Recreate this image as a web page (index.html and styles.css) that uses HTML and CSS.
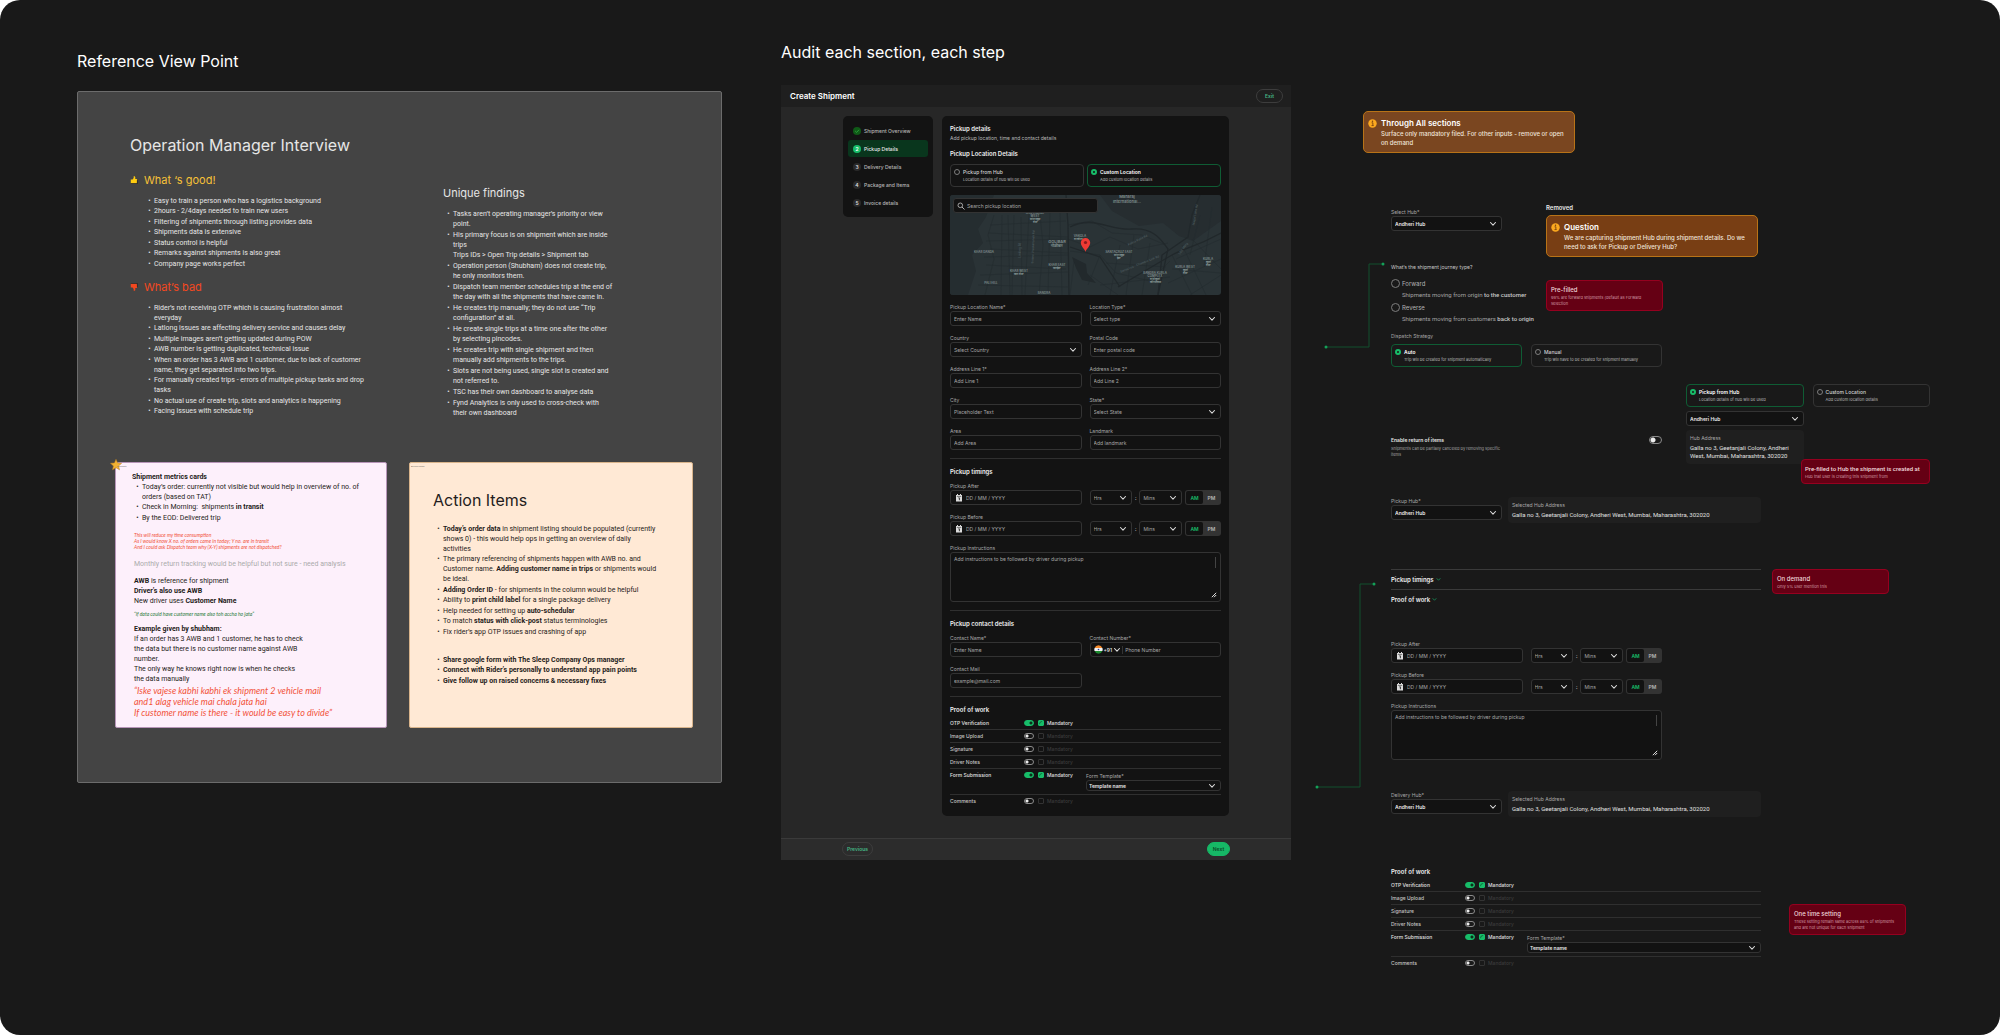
FILE: index.html
```html
<!DOCTYPE html>
<html lang="en">
<head>
    <meta charset="UTF-8">
    <title>Shipment audit board</title>
    <link rel="stylesheet" href="styles.css">
</head>
<body>
    <!-- shared icons -->
    <svg class="sprite" aria-hidden="true">
        <symbol id="chevron" viewBox="0 0 8 8"><path d="M1.5 2.5 4 5.2 6.5 2.5" fill="none" stroke="currentColor" stroke-width="1.1" stroke-linecap="round" stroke-linejoin="round"/></symbol>
        <symbol id="calendar" viewBox="0 0 8 8"><path d="M1 1h1V0h1v1h2V0h1v1h1v6.5H1z" fill="currentColor"/><path d="M1.8 2.4h4.4" stroke="#121212" stroke-width=".5"/><path d="M3.4 3.8h1v2.4" fill="none" stroke="#121212" stroke-width=".8"/></symbol>
        <symbol id="info" viewBox="0 0 10 10"><circle cx="5" cy="5" r="4.7" fill="#fca91f"/><path d="M4 4.2h1.4v3M3.9 7.3h2.4" fill="none" stroke="#7a4310" stroke-width="1"/><circle cx="5" cy="2.6" r=".8" fill="#7a4310"/></symbol>
        <symbol id="thumb" viewBox="0 0 10 10"><path d="M1 4.500h2.200L4.600 2.600V.3c1.800-.5 2.400 1 1.900 3.400H9L8.600 9.200H1z" fill="currentColor"/><path d="M1 9.600h8.200V4.500" fill="none" stroke="#22201c" stroke-width=".8"/></symbol>
    </svg>

    <main class="board">
        <section class="research">
            <h1>Reference View Point</h1>
            <div class="panel">
                <h2>Operation Manager Interview</h2>
                <div class="findings">
                    <div>
                        <h3 class="good"><svg><use href="#thumb"/></svg>What ‘s good!</h3>
                        <ul>
                            <li>Easy to train a person who has a logistics background</li>
                            <li>2hours - 2/4days needed to train new users</li>
                            <li>Filtering of shipments through listing provides data</li>
                            <li>Shipments data is extensive</li>
                            <li>Status control is helpful</li>
                            <li>Remarks against shipments is also great</li>
                            <li>Company page works perfect</li>
                        </ul>
                        <h3 class="bad"><svg class="flip"><use href="#thumb"/></svg>What’s bad</h3>
                        <ul>
                            <li>Rider’s not receiving OTP which is causing frustration almost<br>everyday</li>
                            <li>Latlong issues are affecting delivery service and causes delay</li>
                            <li>Multiple images aren’t getting updated during POW</li>
                            <li>AWB number is getting duplicated, technical issue</li>
                            <li>When an order has 3 AWB and 1 customer, due to lack of customer name, they get separated into two trips.</li>
                            <li>For manually created trips - errors of multiple pickup tasks and drop tasks</li>
                            <li>No actual use of create trip, slots and analytics is happening</li>
                            <li>Facing issues with schedule trip</li>
                        </ul>
                    </div>
                    <div class="unique">
                        <h3>Unique findings</h3>
                        <ul>
                            <li>Tasks aren’t operating manager’s priority or view<br>point.</li>
                            <li>His primary focus is on shipment which are inside<br>trips<br>Trips IDs &gt; Open Trip details &gt; Shipment tab</li>
                            <li>Operation person (Shubham) does not create trip,<br>he only monitors them.</li>
                            <li>Dispatch team member schedules trip at the end of<br>the day with all the shipments that have came in.</li>
                            <li>He creates trip manually; they do not use “Trip<br>configuration” at all.</li>
                            <li>He create single trips at a time one after the other<br>by selecting pincodes.</li>
                            <li>He creates trip with single shipment and then<br>manually add shipments to the trips.</li>
                            <li>Slots are not being used, single slot is created and<br>not referred to.</li>
                            <li>TSC has their own dashboard to analyse data</li>
                            <li>Fynd Analytics is only used to cross-check with<br>their own dashboard</li>
                        </ul>
                    </div>
                </div>

                <div class="cards">
                    <article class="card pink">
                        <svg class="star" viewBox="0 0 12 12"><path d="M6 .3l1.600 3.600 4 .4-3 2.600.9 3.900L6 8.700l-3.500 2.100.9-3.900-3-2.600 4-.4z" fill="#f2b233" stroke="#b9791a" stroke-width=".5"/></svg>
                        <span class="tag">Shipments</span>
                        <h4>Shipment metrics cards</h4>
                        <ul>
                            <li>Today’s order: currently not visible but would help in overview of no. of<br>orders (based on TAT)</li>
                            <li>Check in Morning:&nbsp; shipments <b>in transit</b></li>
                            <li>By the EOD: Delivered trip</li>
                        </ul>
                        <p class="scribble red">This will reduce my time consumption<br>As I would know X no. of orders came in today; Y no. are in transit<br>And I could ask Dispatch team why (X-Y) shipments are not dispatched?</p>
                        <p class="muted">Monthly return tracking would be helpful but not sure - need analysis</p>
                        <p><b>AWB</b> is reference for shipment<br><b>Driver’s also use AWB</b><br>New driver uses <b>Customer Name</b></p>
                        <p class="scribble green">“If data could have customer name also toh accha ho jata”</p>
                        <p class="example"><b>Example given by shubham:</b><br>If an order has 3 AWB and 1 customer, he has to check<br>the data but there is no customer name against AWB<br>number.<br>The only way he knows right now is when he checks<br>the data manually</p>
                        <p class="quote">“Iske vajese kabhi kabhi ek shipment 2 vehicle mail<br>and1 alag vehicle mai chala jata hai<br>If customer name is there - it would be easy to divide”</p>
                    </article>
                    <article class="card peach">
                        <span class="tag">ACTION ITEMS</span>
                        <h3>Action Items</h3>
                        <ul>
                            <li><b>Today’s order data</b> in shipment listing should be populated (currently<br>shows 0) - this would help ops in getting an overview of daily<br>activities</li>
                            <li>The primary referencing of shipments happen with AWB no. and<br>Customer name. <b>Adding customer name in trips</b> or shipments would<br>be ideal.</li>
                            <li><b>Adding Order ID</b> - for shipments in the column would be helpful</li>
                            <li>Ability to <b>print child label</b> for a single package delivery</li>
                            <li>Help needed for setting up <b>auto-schedular</b></li>
                            <li>To match <b>status with click-post</b> status terminologies</li>
                            <li>Fix rider’s app OTP issues and crashing of app</li>
                        </ul>
                        <ul class="next">
                            <li><b>Share google form with The Sleep Company Ops manager</b></li>
                            <li><b>Connect with Rider’s personally to understand app pain points</b></li>
                            <li><b>Give follow up on raised concerns &amp; necessary fixes</b></li>
                        </ul>
                    </article>
                </div>
            </div>
        </section>

        <section class="audit">
            <h1>Audit each section, each step</h1>
            <div class="window">
                <header>
                    <h2>Create Shipment</h2>
                    <button type="button" class="pill">Exit</button>
                </header>
                <div class="workspace">
                    <nav class="steps">
                        <a href="#"><i class="done"><svg viewBox="0 0 8 8"><path d="M2.200 4l1.400 1.400L6 2.800" fill="none" stroke="#39b54a" stroke-width=".7"/></svg></i>Shipment Overview</a>
                        <a href="#" class="active"><i>2</i>Pickup Details</a>
                        <a href="#"><i>3</i>Delivery Details</a>
                        <a href="#"><i>4</i>Package and Items</a>
                        <a href="#"><i>5</i>Invoice details</a>
                    </nav>

                    <form class="sheet">
                        <h3>Pickup details</h3>
                        <p class="sub">Add pickup location, time and contact details</p>
                        <h3 class="location">Pickup Location Details</h3>
                        <div class="options tight">
                            <label class="option"><input type="radio" name="source"><b>Pickup from Hub</b><small>Location details of hub will be used</small></label>
                            <label class="option"><input type="radio" name="source" checked><b>Custom Location</b><small>Add custom location details</small></label>
                        </div>

                        <div class="map">
                            <svg class="streets" viewBox="0 0 271 100" preserveAspectRatio="xMidYMid slice">
                                <rect width="271" height="100" fill="#2a3336"/>
                                <path d="M0 0H44L36 22 28 34 33 48 22 60 26 76 18 100H0z" fill="#252d30"/>
                                <path d="M150 0h121v26l-28 20-14-5-16-13-24 3-27-15z" fill="#262d30"/>
                                <path d="M122 62l14 7 1 9 9 10-14-3-6-12z" fill="#22292c"/>
                                <g fill="none" stroke="#242c2f" stroke-width=".6">
                                    <path d="M44 20l-6 20 6 24-9 36M52 20l-1 80M58 20l2 80M64 20l-2 80M71 22l1 78M79 18l-4 82M90 20l3 30-4 50M100 18l-2 82M110 18l2 82M40 30l76-4M38 38l80 4M36 46l82-2M40 54l78 4M34 62l84-2M36 70l80 4M30 80l88-3M28 90l90 2"/>
                                    <path d="M118 30l24-4 20 12 30 2 24 10M118 44l22 8 20-10 28 12 30-6M120 56l30 4 16 18 34 8 20-20M124 66l-4 34M140 80l28 20M150 60l-12 30M170 50l-10 50M184 40l-8 60M200 48l-8 52M156 68l60 4M150 90l70-8M222 60l20 40M232 50l24 50M242 44l29 30M226 64l45-20M222 74l49 4M218 88l53-24M240 100l31-20M250 20l-10 40M262 12l-8 60"/>
                                </g>
                                <g fill="none" stroke="#21282b" stroke-width="1.300">
                                    <path d="M116 0l2 30 1 70M120 32c24-12 40 4 62 2s30 12 36 20l-10 46"/>
                                    <path d="M208 100l4-40 26-18 4-22 8-20M168 92c20-12 40-24 54-32s20-6 49-22M120 52l30 10 20 30"/>
                                </g>
                                <g class="road-names"><text transform="rotate(-90 71 55)" x="71" y="55">Linking Rd</text><text transform="rotate(-88 84 52)" x="84" y="52">Swami Vivekananda Rd</text><text transform="rotate(-26 188 46)" x="188" y="46">Kalina Kurla Rd</text><text transform="rotate(-22 190 70)" x="190" y="70">Santacruz - Chembur Link Rd</text><text transform="rotate(-80 246 20)" x="246" y="20">Mogul Lane Rd</text><text transform="rotate(-55 234 54)" x="234" y="54">LBS Marg</text></g>
                                <g class="places">
                                    <text x="177" y="3" class="big">Maharaj</text><text x="177" y="8" class="big">International...</text>
                                    <text x="85" y="19">SANTACRUZ</text><text x="85" y="22">WEST</text><text x="85" y="25">सांताक्रूझ</text><text x="85" y="28">वेस्ट</text>
                                    <text x="107" y="48" class="big">GOLIBAR</text><text x="107" y="52" class="big">गोळीबार</text>
                                    <text x="130" y="42">VAKOLA</text><text x="128" y="45">वाकोला</text>
                                    <text x="34" y="58">KHAR DANDA</text>
                                    <text x="169" y="58">SANTACRUZ EAST</text><text x="169" y="61">सांताक्रूझ</text><text x="169" y="64">ईस्ट</text>
                                    <text x="107" y="71">KHAR EAST</text><text x="107" y="74">खार ईस्ट</text>
                                    <text x="69" y="77">KHAR WEST</text><text x="69" y="80">खार वेस्ट</text>
                                    <text x="41" y="89">PALI HILL</text>
                                    <text x="94" y="99">BANDRA</text>
                                    <text x="205" y="79">BANDRA KURLA</text><text x="205" y="82">COMPLEX</text><text x="205" y="85">वांद्रे कुर्ला</text><text x="205" y="88">कॉम्प्लेक्स</text>
                                    <text x="235" y="73">KURLA WEST</text><text x="235" y="76">कुर्ला</text><text x="235" y="79">वेस्ट</text>
                                    <text x="258" y="65">KURLA</text><text x="258" y="68">कुर्ला</text><text x="258" y="71">वेस्ट</text>
                                </g>
                                <path d="M135.500 57c-.6-3-4.700-5.400-4.700-9.200a4.700 4.700 0 0 1 9.400 0c0 3.800-4.100 6.200-4.700 9.200z" fill="#f03a34"/><circle cx="135.500" cy="47.500" r="1.600" fill="#8e1a1d"/>
                            </svg>
                            <label class="search"><svg viewBox="0 0 8 8"><circle cx="3.300" cy="3.300" r="2.300" fill="none" stroke="currentColor" stroke-width=".8"/><path d="M5 5l2.500 2.500" stroke="currentColor" stroke-width=".9"/></svg><input type="text" placeholder="Search pickup location" aria-label="Search pickup location"></label>
                        </div>

                        <div class="fields">
                            <label class="field">Pickup Location Name*<input type="text" placeholder="Enter Name"></label>
                            <label class="field">Location Type*<span class="select"><select><option>Select type</option></select><svg><use href="#chevron"/></svg></span></label>
                            <label class="field">Country<span class="select"><select><option>Select Country</option></select><svg><use href="#chevron"/></svg></span></label>
                            <label class="field">Postal Code<input type="text" placeholder="Enter postal code"></label>
                            <label class="field">Address Line 1*<input type="text" placeholder="Add Line 1"></label>
                            <label class="field">Address Line 2*<input type="text" placeholder="Add Line 2"></label>
                            <label class="field">City<input type="text" placeholder="Placeholder Text"></label>
                            <label class="field">State*<span class="select"><select><option>Select State</option></select><svg><use href="#chevron"/></svg></span></label>
                            <label class="field">Area<input type="text" placeholder="Add Area"></label>
                            <label class="field">Landmark<input type="text" placeholder="Add landmark"></label>
                        </div>
                        <hr>
                        <h3>Pickup timings</h3>
                        <div class="timings">
                            <div class="slot">
                                <label class="field">Pickup After<span class="date"><svg><use href="#calendar"/></svg><input type="text" placeholder="DD / MM / YYYY"></span></label>
                                <div class="clock">
                                    <span class="select"><select aria-label="Hours"><option>Hrs</option></select><svg><use href="#chevron"/></svg></span>:<span class="select"><select aria-label="Minutes"><option>Mins</option></select><svg><use href="#chevron"/></svg></span>
                                    <span class="ampm"><button type="button" class="on">AM</button><button type="button">PM</button></span>
                                </div>
                            </div>
                            <div class="slot">
                                <label class="field">Pickup Before<span class="date"><svg><use href="#calendar"/></svg><input type="text" placeholder="DD / MM / YYYY"></span></label>
                                <div class="clock">
                                    <span class="select"><select aria-label="Hours"><option>Hrs</option></select><svg><use href="#chevron"/></svg></span>:<span class="select"><select aria-label="Minutes"><option>Mins</option></select><svg><use href="#chevron"/></svg></span>
                                    <span class="ampm"><button type="button" class="on">AM</button><button type="button">PM</button></span>
                                </div>
                            </div>
                            <label class="field area">Pickup Instructions<textarea placeholder="Add instructions to be followed by driver during pickup"></textarea><svg class="grip" viewBox="0 0 6 6"><path d="M.8 5.200 5.200.8M3 5.200l2.200-2.200" stroke="#ddd" stroke-width="1"/></svg></label>
                        </div>
                        <hr>
                        <h3>Pickup contact details</h3>
                        <div class="fields contact">
                            <label class="field">Contact Name*<input type="text" placeholder="Enter Name"></label>
                            <label class="field">Contact Number*<span class="phone"><svg class="flag" viewBox="0 0 9 9"><path d="M.6 3a4.200 4.200 0 0 1 7.800 0z" fill="#f58a2c"/><path d="M.6 3h7.800a4 4 0 0 1 0 3H.6a4 4 0 0 1 0-3z" fill="#f3f3f3"/><path d="M.6 6a4.200 4.200 0 0 0 7.800 0z" fill="#1d8b2f"/><circle cx="4.500" cy="4.500" r=".8" fill="#2a3b9a"/></svg><b>+91</b><svg><use href="#chevron"/></svg><input type="tel" placeholder="Phone Number"></span></label>
                            <label class="field">Contact Mail<input type="email" placeholder="example@mail.com"></label>
                        </div>
                        <hr>
                        <h3>Proof of work</h3>
                        <div class="proofs">
                            <div class="proof on"><span>OTP Verification</span><div><input type="checkbox" class="toggle" aria-label="OTP Verification" checked><label><input type="checkbox" checked>Mandatory</label></div></div>
                            <div class="proof"><span>Image Upload</span><div><input type="checkbox" class="toggle" aria-label="Image Upload"><label><input type="checkbox" disabled>Mandatory</label></div></div>
                            <div class="proof"><span>Signature</span><div><input type="checkbox" class="toggle" aria-label="Signature"><label><input type="checkbox" disabled>Mandatory</label></div></div>
                            <div class="proof"><span>Driver Notes</span><div><input type="checkbox" class="toggle" aria-label="Driver Notes"><label><input type="checkbox" disabled>Mandatory</label></div></div>
                            <div class="proof on"><span>Form Submission</span><div><input type="checkbox" class="toggle" aria-label="Form Submission" checked><label><input type="checkbox" checked>Mandatory</label></div><label class="field template">Form Template*<span class="select picked"><select><option>Template name</option></select><svg><use href="#chevron"/></svg></span></label></div>
                            <div class="proof"><span>Comments</span><div><input type="checkbox" class="toggle" aria-label="Comments"><label><input type="checkbox" disabled>Mandatory</label></div></div>
                        </div>
                    </form>
                </div>
                <footer>
                    <button type="button" class="pill">Previous</button>
                    <button type="button" class="pill next">Next</button>
                </footer>
            </div>
        </section>

        <section class="proposal">
            <!-- connectors from the form to the proposed pieces -->
            <svg class="link link-top" viewBox="0 0 62 88"><path d="M2 85h43V2h14" fill="none" stroke="#12512f"/><circle cx="2" cy="85" r="1.500" fill="#14a058"/><circle cx="59" cy="2" r="1.500" fill="#14a058"/></svg>
            <svg class="link link-bottom" viewBox="0 0 62 208"><path d="M2 205h43V2h14" fill="none" stroke="#12512f"/><circle cx="2" cy="205" r="1.500" fill="#14a058"/><circle cx="59" cy="2" r="1.500" fill="#14a058"/></svg>

            <aside class="callout first">
                <svg><use href="#info"/></svg>
                <h4>Through All sections</h4>
                <p>Surface only mandatory filed. For other inputs - remove or open on demand</p>
            </aside>

            <div class="pieces">
                <div class="hub-question">
                    <label class="field">Select Hub*<span class="select picked"><select><option>Andheri Hub</option></select><svg><use href="#chevron"/></svg></span></label>
                    <div>
                        <h5>Removed</h5>
                        <aside class="callout question">
                            <svg><use href="#info"/></svg>
                            <h4>Question</h4>
                            <p>We are capturing shipment Hub during shipment details. Do we need to ask for Pickup or Delivery Hub?</p>
                        </aside>
                    </div>
                </div>

                <div class="journey">
                    <fieldset>
                        <legend>What’s the shipment journey type?</legend>
                        <label><input type="radio" name="journey">Forward<small>Shipments moving from origin <b>to the customer</b></small></label>
                        <label><input type="radio" name="journey">Reverse<small>Shipments moving from customers <b>back to origin</b></small></label>
                    </fieldset>
                    <aside class="sticky"><h5>Pre-filled</h5><p>99% are forward shipments (default as Forward selection</p></aside>
                </div>

                <p class="caption">Dispatch Strategy</p>
                <div class="options dispatch">
                    <label class="option"><input type="radio" name="dispatch" checked><b>Auto</b><small>Trip will be created for shipment automatically</small></label>
                    <label class="option"><input type="radio" name="dispatch"><b>Manual</b><small>Trip will have to be created for shipment manually</small></label>
                </div>

                <div class="returns">
                    <div class="enable">
                        <label for="returns"><b>Enable return of items</b><small>Shipments can be partially canceled by removing specific<br>items</small></label>
                        <input type="checkbox" class="toggle large" id="returns">
                    </div>
                    <div class="pickup-hub">
                        <label class="option"><input type="radio" name="hub" checked><b>Pickup from Hub</b><small>Location details of hub will be used</small></label>
                        <label class="option"><input type="radio" name="hub"><b>Custom Location</b><small>Add custom location details</small></label>
                        <span class="select picked"><select aria-label="Hub"><option>Andheri Hub</option></select><svg><use href="#chevron"/></svg></span>
                        <div class="address"><small>Hub Address</small><p>Galla no 3, Geetanjali Colony, Andheri<br>West, Mumbai, Maharashtra, 302020</p></div>
                        <aside class="sticky"><h5>Pre-filled to Hub the shipment is created at</h5><p>Hub that user is creating this shipment from</p></aside>
                    </div>
                </div>

                <div class="chosen-hub">
                    <label class="field">Pickup Hub*<span class="select picked"><select><option>Andheri Hub</option></select><svg><use href="#chevron"/></svg></span></label>
                    <div class="address"><small>Selected Hub Address</small><p>Galla no 3, Geetanjali Colony, Andheri West, Mumbai, Maharashtra, 302020</p></div>
                </div>

                <div class="on-demand">
                    <div>
                        <button type="button">Pickup timings<svg><use href="#chevron"/></svg></button>
                        <button type="button">Proof of work<svg><use href="#chevron"/></svg></button>
                    </div>
                    <aside class="sticky"><h5>On demand</h5><p>Only 5% user mention this</p></aside>
                </div>

                <div class="timings">
                    <div class="slot">
                        <label class="field">Pickup After<span class="date"><svg><use href="#calendar"/></svg><input type="text" placeholder="DD / MM / YYYY"></span></label>
                        <div class="clock">
                            <span class="select"><select aria-label="Hours"><option>Hrs</option></select><svg><use href="#chevron"/></svg></span>:<span class="select"><select aria-label="Minutes"><option>Mins</option></select><svg><use href="#chevron"/></svg></span>
                            <span class="ampm"><button type="button" class="on">AM</button><button type="button">PM</button></span>
                        </div>
                    </div>
                    <div class="slot">
                        <label class="field">Pickup Before<span class="date"><svg><use href="#calendar"/></svg><input type="text" placeholder="DD / MM / YYYY"></span></label>
                        <div class="clock">
                            <span class="select"><select aria-label="Hours"><option>Hrs</option></select><svg><use href="#chevron"/></svg></span>:<span class="select"><select aria-label="Minutes"><option>Mins</option></select><svg><use href="#chevron"/></svg></span>
                            <span class="ampm"><button type="button" class="on">AM</button><button type="button">PM</button></span>
                        </div>
                    </div>
                    <label class="field area">Pickup Instructions<textarea placeholder="Add instructions to be followed by driver during pickup"></textarea><svg class="grip" viewBox="0 0 6 6"><path d="M.8 5.200 5.200.8M3 5.200l2.200-2.200" stroke="#ddd" stroke-width="1"/></svg></label>
                </div>

                <div class="chosen-hub delivery">
                    <label class="field">Delivery Hub*<span class="select picked"><select><option>Andheri Hub</option></select><svg><use href="#chevron"/></svg></span></label>
                    <div class="address"><small>Selected Hub Address</small><p>Galla no 3, Geetanjali Colony, Andheri West, Mumbai, Maharashtra, 302020</p></div>
                </div>

                <div class="one-time">
                    <div>
                        <h3>Proof of work</h3>
                        <div class="proofs">
                            <div class="proof on"><span>OTP Verification</span><div><input type="checkbox" class="toggle" aria-label="OTP Verification" checked><label><input type="checkbox" checked>Mandatory</label></div></div>
                            <div class="proof"><span>Image Upload</span><div><input type="checkbox" class="toggle" aria-label="Image Upload"><label><input type="checkbox" disabled>Mandatory</label></div></div>
                            <div class="proof"><span>Signature</span><div><input type="checkbox" class="toggle" aria-label="Signature"><label><input type="checkbox" disabled>Mandatory</label></div></div>
                            <div class="proof"><span>Driver Notes</span><div><input type="checkbox" class="toggle" aria-label="Driver Notes"><label><input type="checkbox" disabled>Mandatory</label></div></div>
                            <div class="proof on"><span>Form Submission</span><div><input type="checkbox" class="toggle" aria-label="Form Submission" checked><label><input type="checkbox" checked>Mandatory</label></div><label class="field template">Form Template*<span class="select picked"><select><option>Template name</option></select><svg><use href="#chevron"/></svg></span></label></div>
                            <div class="proof"><span>Comments</span><div><input type="checkbox" class="toggle" aria-label="Comments"><label><input type="checkbox" disabled>Mandatory</label></div></div>
                        </div>
                    </div>
                    <aside class="sticky"><h5>One time setting</h5><p>These setting remain same across 88% of shipments and are not unique for each shipment</p></aside>
                </div>
            </div>
        </section>
    </main>
</body>
</html>
```
FILE: styles.css
```css
* {
    box-sizing: border-box;
}
body {
    margin: 0;
    background: #fff;
    color: #e6e6e6;
    font-family: Inter, "Liberation Sans", sans-serif;
    font-size: 5px;
    line-height: 8px;
}
h1, h2, h3, h4, h5, p, ul, fieldset {
    margin: 0;
    padding: 0;
    border: 0;
}
input, select, textarea, button {
    font: inherit;
    color: inherit;
    margin: 0;
    padding: 0;
    border: 0;
    background: none;
    appearance: none;
    border-radius: 0;
    min-width: 0;
}
::placeholder {
    color: #a6a6a6;
    opacity: 1;
}
a {
    color: inherit;
    text-decoration: none;
}
b {
    font-weight: 600;
}
small {
    font-size: 4px;
}
svg {
    width: 8px;
    height: 8px;
    flex: none;
}
.sprite {
    display: none;
}
.board {
    display: grid;
    grid-template-columns: 645fr 510fr 580fr;
    column-gap: 59px;
    align-items: start;
    min-height: 100vh;
    padding: 0 70px 0 77px;
    background: #191919;
    border-radius: 20px;
}
h1 {
    color: #fff;
    font-size: 16px;
    line-height: 24px;
    font-weight: 400;
}

/* interview notes */
.research {
    padding-top: 49px;
}
.panel {
    margin-top: 18px;
    padding: 41px 28px 54px 37px;
    background: #444;
    border: 1px solid #6c6c6c;
    border-radius: 2px;
    font-family: Roboto, Inter, sans-serif;
    font-size: 7px;
    line-height: 10px;
}
.panel h2, .panel h3 {
    font-family: Inter, sans-serif;
    font-weight: 400;
}
.panel h2 {
    padding-left: 15px;
    font-size: 16px;
    line-height: 24px;
}
.panel h3 {
    display: flex;
    align-items: center;
    gap: 6px;
    margin-bottom: 8px;
    font-size: 11px;
    line-height: 16px;
}
.panel ul {
    padding-left: 10px;
    list-style-type: "•\00a0\00a0";
}
.panel li:nth-child(2n) {
    margin-bottom: 1px;
}
.findings {
    display: grid;
    grid-template-columns: 240px 1fr;
    column-gap: 73px;
    margin-top: 15px;
    padding-left: 15px;
}
.findings div:first-child ul {
    padding-left: 24px;
}
.findings .good {
    color: #f7c137;
}
.findings .good svg {
    color: #ffcc10;
}
.findings .bad {
    margin-top: 10px;
    color: #f4481f;
}
.flip {
    transform: scaleY(-1);
}
.unique {
    padding-top: 13px;
}
.findings .unique li {
    margin-bottom: 1px;
}
.cards {
    display: grid;
    grid-template-columns: 272fr 284fr;
    gap: 22px;
    margin-top: 43px;
}
.card {
    position: relative;
    padding: 9px 10px 9px 16px;
    border: 1px solid #b795b8;
    border-radius: 2px;
    background: #fdf0fb;
    color: #1f1c20;
}
.card b, .card h4 {
    font-weight: 700;
}
.card h4 {
    font-size: 7px;
    line-height: 10px;
}
.card p {
    margin-top: 7px;
    padding-left: 2px;
}
.card .muted {
    margin-top: 9px;
    color: #ababab;
}
.card .scribble {
    margin-top: 9px;
    font-family: Lato, Inter, sans-serif;
    font-size: 5px;
    font-style: italic;
    line-height: 6px;
}
.card .green {
    margin-top: 5px;
    color: #1f7a3a;
}
.red, .quote {
    color: #f2533a;
}
.card .quote {
    margin-top: 1px;
    font-family: Lato, Inter, sans-serif;
    font-size: 9px;
    font-style: italic;
    line-height: 11px;
}
.star {
    position: absolute;
    top: -4px;
    left: -6px;
    width: 12px;
    height: 12px;
}
.tag {
    position: absolute;
    top: 2px;
    left: 1px;
    font-size: 2px;
    line-height: 2px;
    color: #77706c;
}
.peach {
    padding: 26px 16px 8px 23px;
    border-color: #d9b48b;
    background: #ffe9d5;
}
.peach h3 {
    margin-bottom: 13px;
    font-size: 16px;
    line-height: 22px;
}
.peach .next {
    margin-top: 18px;
}

/* create shipment window */
.audit {
    padding-top: 40px;
}
.window {
    margin-top: 21px;
    background: #272727;
}
.window header {
    display: flex;
    justify-content: space-between;
    align-items: center;
    height: 22px;
    padding: 0 8px 0 9px;
    background: #1f1f1f;
}
.window h2 {
    color: #fff;
    font-size: 8px;
    font-weight: 600;
}
.pill {
    height: 14px;
    padding: 0 8px;
    border: 1px solid #3d3d3d;
    border-radius: 7px;
    color: #45b583;
    font-weight: 600;
}
.workspace {
    display: grid;
    grid-template-columns: 90fr 287fr;
    gap: 9px;
    align-items: start;
    padding: 9px 62px 22px;
}
.window footer {
    display: flex;
    justify-content: space-between;
    align-items: center;
    height: 22px;
    padding: 0 61px 1px;
    border-top: 1px solid #3a3a3a;
    background: #2c2c2c;
}
.window footer .pill {
    padding: 0 4px;
}
.window .next {
    min-width: 23px;
    border-color: #16b866;
    background: #16b866;
    color: #0b4a28;
}
.steps {
    display: grid;
    gap: 1px;
    padding: 6px 5px;
    border-radius: 5px;
    background: #131313;
}
.steps a {
    display: flex;
    align-items: center;
    gap: 3px;
    height: 17px;
    padding-left: 5px;
    border-radius: 3px;
    color: #b8b8b8;
    font-weight: 500;
}
.steps i {
    width: 8px;
    height: 8px;
    border-radius: 50%;
    background: #2a2a2a;
    color: #ddd;
    font-style: normal;
    font-weight: 600;
    text-align: center;
}
.steps .done {
    background: #0f5a17;
}
.steps svg {
    display: block;
}
.steps .active {
    background: #09361d;
    color: #e8e8e8;
}
.steps .active i {
    background: #17bd69;
    color: #fff;
}
.sheet {
    padding: 9px 8px 8px;
    border-radius: 5px;
    background: #131313;
}
.sheet h3, .one-time h3 {
    color: #eee;
    font-size: 6px;
    font-weight: 600;
    line-height: 8px;
}
.sub {
    margin-top: 2px;
    line-height: 6px;
    color: #b8b8b8;
}
.sheet .location {
    margin-top: 9px;
}
hr {
    height: 1px;
    margin: 8px 0 9px;
    border: 0;
    background: #2f2f2f;
}
.options {
    display: grid;
    grid-template-columns: 1fr 1fr;
    gap: 9px;
}
.tight {
    gap: 3px;
    margin: 6px 0 8px;
}
.option {
    display: grid;
    grid-template-columns: 6px 1fr;
    column-gap: 3px;
    align-items: center;
    align-content: center;
    height: 23px;
    padding-left: 3px;
    border: 1px solid #333;
    border-radius: 4px;
    color: #d0d0d0;
}
.option small {
    grid-column: 2;
    color: #b8b8b8;
}
.option b {
    font-weight: 500;
}
.option:has(:checked) {
    border-color: #0f5c34;
}
.option:has(:checked) b {
    color: #fff;
    font-weight: 600;
}
[type=radio] {
    width: 6px;
    height: 6px;
    border: 1px solid #7d7d7d;
    border-radius: 50%;
}
[type=radio]:checked {
    border: 2px solid #17bd69;
}
.map {
    position: relative;
    height: 100px;
    border-radius: 3px;
    overflow: hidden;
}
.streets {
    display: block;
    width: 100%;
    height: 100%;
}
.places {
    fill: #829191;
    font-size: 3px;
    font-weight: 600;
    text-anchor: middle;
}
.places .big {
    font-size: 4px;
}
.road-names {
    fill: #57666a;
    font-size: 3px;
    text-anchor: middle;
}
.search {
    position: absolute;
    top: 3px;
    left: 3px;
    display: flex;
    align-items: center;
    gap: 2px;
    width: 145px;
    height: 15px;
    padding: 0 3px;
    border: 1px solid #333;
    border-radius: 3px;
    background: #121212;
    color: #c4c4c4;
}
.search input {
    flex: 1;
}

/* form controls */
.fields {
    display: grid;
    grid-template-columns: 1fr 1fr;
    gap: 8px;
    margin-top: 8px;
}
.contact {
    margin-top: 6px;
}
.field {
    display: grid;
    grid-template-columns: minmax(0, 1fr);
    color: #a8a8a8;
}
.field > input, .select, .date, .phone {
    height: 15px;
    border: 1px solid #333;
    border-radius: 3px;
    background: #121212;
}
.field > input {
    padding: 0 3px;
}
.select {
    display: grid;
    grid-template-columns: minmax(0, 1fr);
    align-items: center;
    color: #a6a6a6;
}
.select select, .select svg {
    grid-area: 1 / 1;
}
.select select {
    height: 13px;
    padding: 0 3px;
}
.select svg {
    justify-self: end;
    margin-right: 4px;
    color: #d8d8d8;
    pointer-events: none;
}
.picked select {
    color: #e8e8e8;
    font-weight: 600;
}
.date, .phone {
    display: flex;
    align-items: center;
    gap: 3px;
    padding: 0 4px;
    color: #dcdcdc;
}
.phone {
    gap: 1px;
    padding: 0 3px;
}
.phone .flag {
    width: 9px;
    height: 9px;
}
.phone input {
    flex: 1;
    padding-left: 2px;
    border-left: 1px solid #333;
}
.timings {
    display: grid;
    gap: 8px;
    margin-top: 6px;
}
.slot {
    display: grid;
    grid-template-columns: 1fr 1fr;
    gap: 8px;
    align-items: end;
}
.clock {
    display: flex;
    align-items: center;
    gap: 3px;
}
.clock .select {
    flex: 1;
}
.ampm {
    display: flex;
    height: 15px;
    padding: 1px;
    border-radius: 3px;
    background: #333;
}
.ampm button {
    width: 17px;
    border-radius: 2px;
    color: #b8b8b8;
    font-weight: 600;
}
.ampm .on {
    background: #121212;
    color: #17bd69;
}
.area {
    position: relative;
}
textarea {
    height: 50px;
    padding: 2px 3px;
    border: 1px solid #333;
    border-radius: 3px;
    resize: none;
}
.area textarea {
    background: linear-gradient(#444, #444) right 4px top 4px / 1px 11px no-repeat #121212;
}
.grip {
    position: absolute;
    right: 4px;
    bottom: 4px;
    width: 6px;
    height: 6px;
}
.proofs {
    margin-top: 3px;
}
.proof {
    display: grid;
    grid-template-columns: 74px 62px 1fr;
    align-items: start;
    border-bottom: 1px solid #2f2f2f;
    color: #c4c4c4;
    font-weight: 500;
    line-height: 12px;
}
.proof:last-child {
    padding-bottom: 1px;
    border: 0;
}
.proof > div, .proof div label {
    display: flex;
    align-items: center;
    gap: 4px;
}
.proof div label {
    gap: 3px;
    color: #3c3c3c;
}
.proof.on, .proof.on div label {
    color: #e0e0e0;
}
.toggle {
    width: 10px;
    height: 6px;
    border: 1px solid #8a8a8a;
    border-radius: 3px;
    background: radial-gradient(circle at 2px 2px, #eee 1px, transparent 2px);
}
.toggle:checked {
    border-color: #17bd69;
    background: radial-gradient(circle at 6px 2px, #0c2e1b 1px, #17bd69 2px);
}
.large {
    width: 13px;
    height: 8px;
    border-radius: 4px;
    background: radial-gradient(circle at 3px 3px, #eee 2px, transparent 3px);
}
.proof label input {
    width: 6px;
    height: 6px;
    border: 1px solid #333;
    border-radius: 1px;
}
.proof label input:checked {
    border-color: #17bd69;
    background: linear-gradient(135deg, #17bd69 1px, #0d7a43 2px, #17bd69 3px);
}
.template {
    padding: 3px 0;
    line-height: 8px;
    font-weight: 400;
}
.template .select {
    height: 11px;
}
.template select {
    height: 9px;
    padding: 0 2px;
}

/* proposed changes */
.proposal {
    position: relative;
    padding-top: 111px;
}
.link {
    position: absolute;
    left: -26px;
    width: 62px;
}
.link-top {
    top: 262px;
    height: 88px;
}
.link-bottom {
    top: 582px;
    left: -35px;
    height: 208px;
}
.callout {
    display: grid;
    grid-template-columns: 10px 1fr;
    column-gap: 3px;
    align-items: center;
    align-content: center;
    width: 212px;
    height: 42px;
    padding: 0 4px;
    border: 1px solid #b87317;
    border-radius: 5px;
    background: #7a4620;
    color: #f0e4da;
    font-weight: 500;
}
.callout svg {
    width: 9px;
    height: 9px;
}
.callout h4 {
    color: #fff;
    font-size: 8px;
    font-weight: 600;
    line-height: 12px;
}
.callout p {
    grid-column: 2;
    font-size: 6px;
    line-height: 9px;
}
.first {
    margin-left: 13px;
}
.question {
    margin-top: 3px;
    background: #783e14;
}
.pieces {
    padding-left: 41px;
    padding-top: 51px;
}
.hub-question, .journey {
    display: grid;
    grid-template-columns: 111px 212px;
    gap: 44px;
}
.hub-question > .field {
    align-content: start;
    padding-top: 4px;
}
.hub-question h5 {
    font-size: 6px;
    font-weight: 600;
}
.journey {
    grid-template-columns: 152px 117px;
    gap: 3px;
    margin-top: 6px;
}
legend {
    padding: 0;
    color: #c8c8c8;
}
.journey label {
    display: grid;
    grid-template-columns: 9px 1fr;
    column-gap: 2px;
    align-items: center;
    margin-top: 4px;
    color: #b4b4b4;
    font-size: 6px;
    line-height: 8px;
}
.journey legend + label {
    margin-top: 8px;
}
.journey [type=radio] {
    width: 9px;
    height: 9px;
}
.journey small {
    grid-column: 2;
    margin-top: 3px;
    color: #a4a4a4;
    font-family: Roboto, Inter, sans-serif;
    font-size: 6px;
}
.journey b {
    color: #c8c8c8;
    font-weight: 500;
}
.sticky {
    align-self: start;
    padding: 4px 4px 3px;
    border: 1px solid #95001f;
    border-radius: 4px;
    background: #650014;
    color: #d09aa4;
    font-size: 4px;
    line-height: 6px;
}
.sticky h5 {
    color: #f0d8dc;
    font-size: 6px;
    font-weight: 500;
    line-height: 10px;
}
.journey .sticky {
    margin-top: 17px;
}
.caption {
    margin-top: 9px;
    color: #a8a8a8;
}
.dispatch {
    width: 271px;
    margin-top: 4px;
}
.returns {
    display: grid;
    grid-template-columns: 271px 1fr;
    gap: 24px;
    margin-top: 17px;
}
.enable {
    display: flex;
    justify-content: space-between;
    align-items: start;
    padding-top: 52px;
}
.enable small {
    display: block;
    margin-top: 2px;
    color: #a4a4a4;
    line-height: 6px;
}
.pickup-hub {
    position: relative;
    display: grid;
    grid-template-columns: 1fr 1fr;
    gap: 4px 9px;
}
.pickup-hub .select, .pickup-hub .address {
    grid-column: 1;
}
.pickup-hub .sticky {
    position: absolute;
    top: 75px;
    right: 0;
    width: 129px;
    padding: 4px 2px 3px 3px;
}
.pickup-hub h5 {
    font-family: Roboto, Inter, sans-serif;
    white-space: nowrap;
}
.address {
    padding: 4px;
    border-radius: 4px;
    background: #1f1f1f;
}
.address small {
    display: block;
    color: #a8a8a8;
    font-size: 5px;
}
.address p {
    margin-top: 2px;
    color: #e0e0e0;
    font-family: Roboto, Inter, sans-serif;
    font-size: 6px;
}
.chosen-hub {
    display: grid;
    grid-template-columns: 111px 253px;
    gap: 6px;
    align-items: start;
    margin-top: 33px;
}
.on-demand {
    display: grid;
    grid-template-columns: 370px 117px;
    gap: 11px;
    margin-top: 46px;
}
.on-demand button {
    display: flex;
    align-items: center;
    gap: 2px;
    width: 100%;
    height: 20px;
    border-top: 1px solid #3a3a3a;
    color: #eee;
    font-size: 6px;
    font-weight: 600;
}
.on-demand button svg {
    width: 5px;
    height: 5px;
    color: #17a566;
}
.pieces .timings {
    width: 271px;
    margin-top: 31px;
}
.delivery {
    margin-top: 31px;
}
.one-time {
    display: grid;
    grid-template-columns: 370px 117px;
    gap: 28px;
    margin-top: 51px;
}
.one-time .sticky {
    margin-top: 36px;
}
```
